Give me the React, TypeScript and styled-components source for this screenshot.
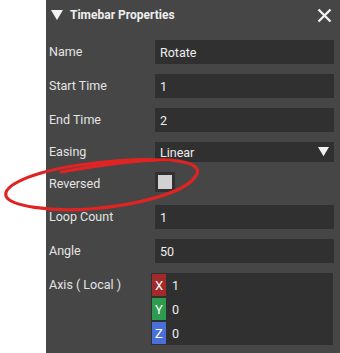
import styled, { createGlobalStyle } from "styled-components";

const GlobalStyle = createGlobalStyle`
  html, body {
    margin: 0;
    padding: 0;
    background: #ffffff;
  }
  body {
    font-family: Roboto, "Liberation Sans", sans-serif;
  }
`;

const Page = styled.div`
  position: relative;
  width: 340px;
  height: 353px;
  overflow: hidden;
`;

const Panel = styled.div`
  margin-left: 46px;
  height: 353px;
  background: #464646;
  color: #e6e6e6;
  font-size: 12.5px;
`;

const Header = styled.div`
  display: flex;
  align-items: center;
  height: 30px;
  padding: 0 8px 0 5px;
`;

const Title = styled.span`
  flex: 1;
  margin-left: 7px;
  font-size: 12px;
  font-weight: 700;
  color: #eeeeee;
`;

const Form = styled.div`
  display: grid;
  grid-template-columns: 106px 179px;
  row-gap: 10px;
  padding: 10px 0 0 3px;
`;

const Label = styled.div<{ $top?: boolean }>`
  display: flex;
  align-items: ${(p) => (p.$top ? "flex-start" : "center")};
  line-height: ${(p) => (p.$top ? 24 : 16)}px;
  color: #e4e4e4;
`;

const Field = styled.div<{ $h?: number }>`
  display: flex;
  align-items: center;
  height: ${(p) => p.$h ?? 24}px;
  padding: 0 5px;
  background: #303030;
  color: #eeeeee;
`;

const Select = styled(Field)`
  justify-content: space-between;
  padding-right: 5px;
`;

const CheckCell = styled.div`
  height: 20px;
  margin-bottom: 3px;
`;

const CheckBox = styled.div`
  width: 14px;
  height: 14px;
  border: 3px solid #313131;
  background: #d2d2d2;
`;

const AxisBox = styled.div`
  display: flex;
  flex-direction: column;
  gap: 2px;
  margin-left: -4px;
  margin-right: 1px;
  padding: 1px;
  background: #303030;
`;

const AxisRow = styled.div`
  display: flex;
  align-items: center;
  height: 22px;
  color: #eeeeee;
`;

const Badge = styled.span<{ $bg: string }>`
  display: flex;
  align-items: center;
  justify-content: center;
  width: 14px;
  height: 22px;
  margin-right: 6px;
  background: ${(p) => p.$bg};
  color: #ffffff;
  font-size: 13px;
`;

const Annotation = styled.svg`
  position: absolute;
  left: 0;
  top: 0;
  pointer-events: none;
`;

const Triangle = ({ size, color }: { size: number; color: string }) => (
  <svg width={size} height={size * 0.85} viewBox="0 0 12 10">
    <path d="M0 0 H12 L6 10 Z" fill={color} />
  </svg>
);

const CloseIcon = () => (
  <svg width="15" height="15" viewBox="0 0 15 15">
    <path d="M1.5 1.5 L13.5 13.5 M13.5 1.5 L1.5 13.5" stroke="#f2f2f2" strokeWidth="2.4" />
  </svg>
);

const axes = [
  { name: "X", value: "1", color: "#a12a2a" },
  { name: "Y", value: "0", color: "#2d9c4f" },
  { name: "Z", value: "0", color: "#4a6fd6" },
];

export default function App() {
  return (
    <Page>
      <GlobalStyle />
      <Panel>
        <Header>
          <Triangle size={12} color="#f2f2f2" />
          <Title>Timebar Properties</Title>
          <CloseIcon />
        </Header>
        <Form>
          <Label>Name</Label>
          <Field>Rotate</Field>
          <Label>Start Time</Label>
          <Field>1</Field>
          <Label>End Time</Label>
          <Field>2</Field>
          <Label>Easing</Label>
          <Select $h={20}>
            Linear
            <Triangle size={11} color="#f2f2f2" />
          </Select>
          <Label>Reversed</Label>
          <CheckCell>
            <CheckBox />
          </CheckCell>
          <Label>Loop Count</Label>
          <Field>1</Field>
          <Label>Angle</Label>
          <Field>50</Field>
          <Label $top>Axis ( Local )</Label>
          <AxisBox>
            {axes.map((a) => (
              <AxisRow key={a.name}>
                <Badge $bg={a.color}>{a.name}</Badge>
                {a.value}
              </AxisRow>
            ))}
          </AxisBox>
        </Form>
      </Panel>
      <Annotation width="340" height="353" viewBox="0 0 340 353">
        <path
          d="M61 172 C 100 165, 140 159, 170 160 C 195 162, 202 169, 195 177 C 185 192, 140 205, 90 209 C 50 212, 10 206, 6 196 C 3 186, 30 172, 80 165 C 110 161, 140 159, 160 160"
          fill="none"
          stroke="#e02424"
          strokeWidth="3.2"
          strokeLinecap="round"
        />
      </Annotation>
    </Page>
  );
}
